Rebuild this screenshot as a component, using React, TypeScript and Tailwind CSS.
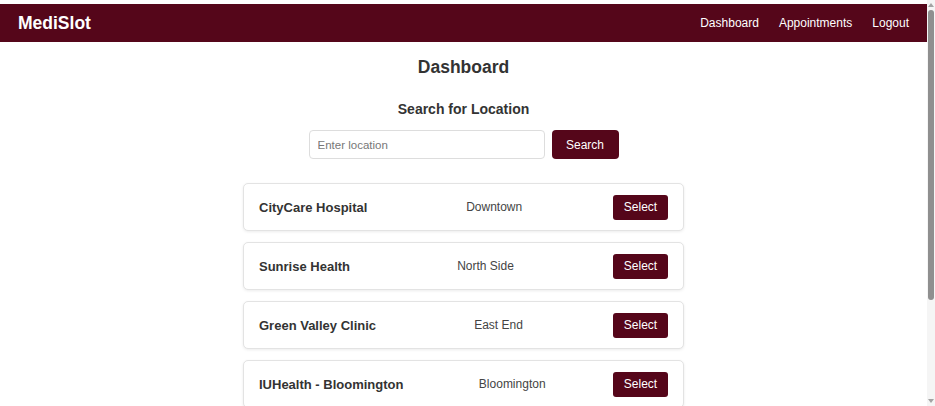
const locations = [
  { name: "CityCare Hospital", area: "Downtown" },
  { name: "Sunrise Health", area: "North Side" },
  { name: "Green Valley Clinic", area: "East End" },
  { name: "IUHealth - Bloomington", area: "Bloomington" },
  { name: "Riverside Medical Center", area: "West End" },
];

function Scrollbar() {
  return (
    <div className="fixed right-0 top-0 flex h-screen w-[8px] flex-col items-center bg-[#f5f5f5]">
      <div className="mt-[3px] h-0 w-0 border-x-[3px] border-b-[4px] border-x-transparent border-b-[#a3a3a3]" />
      <div className="mt-[3px] h-[290px] w-[6px] rounded-full bg-[#8f8f8f]" />
      <div className="mt-auto mb-[3px] h-0 w-0 border-x-[3px] border-t-[4px] border-x-transparent border-t-[#a3a3a3]" />
    </div>
  );
}

export default function App() {
  return (
    <div className="min-h-screen w-[927px] bg-white pt-[4px] text-[#333] font-['Liberation_Sans',Arial,sans-serif]">
      <nav className="flex h-[38px] items-center justify-between bg-[#55061a] px-[18px] text-white">
        <span className="text-[17.5px] font-bold">MediSlot</span>
        <div className="flex gap-[20px] text-[12px]">
          <a href="#">Dashboard</a>
          <a href="#">Appointments</a>
          <a href="#">Logout</a>
        </div>
      </nav>

      <main className="mx-auto flex w-[441px] flex-col items-center pb-[40px]">
        <h1 className="mt-[12px] text-[17.5px] font-bold">Dashboard</h1>
        <h2 className="mt-[19px] text-[14px] font-bold">Search for Location</h2>

        <div className="mt-[10px] flex gap-[7px]">
          <input
            placeholder="Enter location"
            className="h-[29px] w-[236px] rounded-[4px] border border-[#ddd] px-[8px] text-[11.5px] placeholder:text-[#777] outline-none"
          />
          <button className="h-[29px] w-[67px] rounded-[4px] bg-[#55061a] text-[12px] text-white">
            Search
          </button>
        </div>

        <div className="mt-[24px] flex w-full flex-col gap-[11px]">
          {locations.map((loc) => (
            <div
              key={loc.name}
              className="flex h-[48px] items-center justify-between rounded-[5px] border border-[#e3e3e3] bg-white px-[15px] shadow-[0_1px_3px_rgba(0,0,0,0.08)]"
            >
              <span className="text-[13px] font-bold">{loc.name}</span>
              <span className="ml-[8px] text-[12px] text-[#444]">{loc.area}</span>
              <button className="h-[25px] w-[55px] rounded-[3px] bg-[#55061a] text-[12px] text-white">
                Select
              </button>
            </div>
          ))}
        </div>
      </main>
      <Scrollbar />
    </div>
  );
}
